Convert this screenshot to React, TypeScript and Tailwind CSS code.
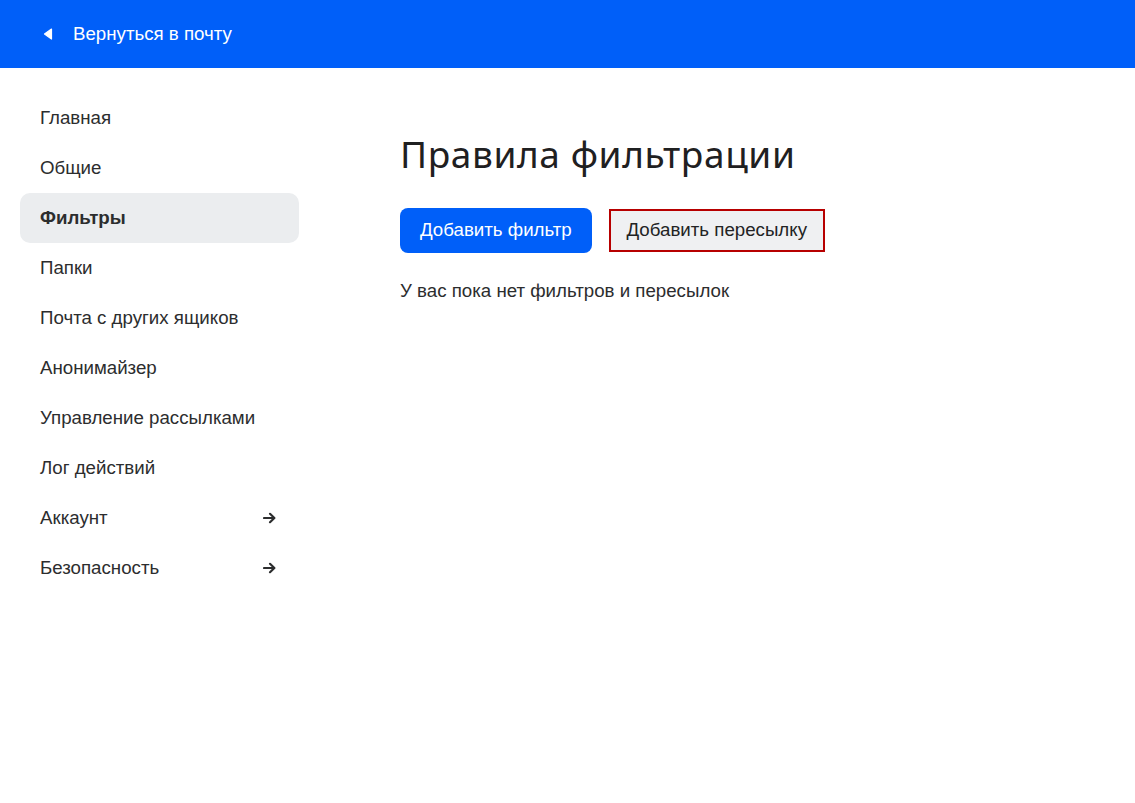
import React from "react";

const items = [
  { label: "Главная" },
  { label: "Общие" },
  { label: "Фильтры", active: true },
  { label: "Папки" },
  { label: "Почта с других ящиков" },
  { label: "Анонимайзер" },
  { label: "Управление рассылками" },
  { label: "Лог действий" },
  { label: "Аккаунт", arrow: true },
  { label: "Безопасность", arrow: true },
];

function Arrow() {
  return (
    <svg width="14" height="12" viewBox="0 0 14 12" fill="none">
      <path d="M1 6h10" stroke="#2c2d2e" strokeWidth="2.2" strokeLinecap="round" />
      <path d="M7 1.8L11.4 6 7 10.2" stroke="#2c2d2e" strokeWidth="2.2" strokeLinecap="round" strokeLinejoin="round" />
    </svg>
  );
}

export default function App() {
  return (
    <div className="min-h-[803px] bg-white text-[#2c2d2e]" style={{ fontFamily: '"Liberation Sans", Arial, sans-serif' }}>
      <header className="h-[68px] bg-[#005ff9] flex items-center pl-[43px]">
        <svg width="10" height="12" viewBox="0 0 10 12" className="mr-[20px]">
          <path d="M8.5 1L1.5 6 8.5 11z" fill="white" stroke="white" strokeWidth="1.2" strokeLinejoin="round" />
        </svg>
        <span className="text-white text-[18.7px]">Вернуться в почту</span>
      </header>
      <div className="flex">
        <nav className="w-[279px] ml-[20px] pt-[25px] flex flex-col">
          {items.map((it) => (
            <div
              key={it.label}
              className={
                "h-[50px] flex items-center justify-between pl-[20px] pr-[22px] rounded-[10px] text-[18.7px] " +
                (it.active ? "bg-[#ebedef] font-bold" : "")
              }
            >
              <span className="pt-[1px]">{it.label}</span>
              {it.arrow && <Arrow />}
            </div>
          ))}
        </nav>
        <main className="ml-[101px] pt-[64px]">
          <h1 className="text-[37px] leading-[44px] text-[#1f2021] tracking-[0.6px]" style={{ fontFamily: '"Noto Sans", sans-serif', fontWeight: 450 }}>
            Правила фильтрации
          </h1>
          <div className="flex items-center gap-[17px] mt-[32px]">
            <button className="h-[45px] px-[20px] rounded-[8px] bg-[#005ff9] text-white text-[18.7px]">
              Добавить фильтр
            </button>
            <button className="h-[43px] w-[216px] border-2 border-[#b70000] bg-[#eff0f2] text-[18.7px] text-[#222324]">
              Добавить пересылку
            </button>
          </div>
          <p className="mt-[24px] text-[18.7px]">У вас пока нет фильтров и пересылок</p>
        </main>
      </div>
    </div>
  );
}
